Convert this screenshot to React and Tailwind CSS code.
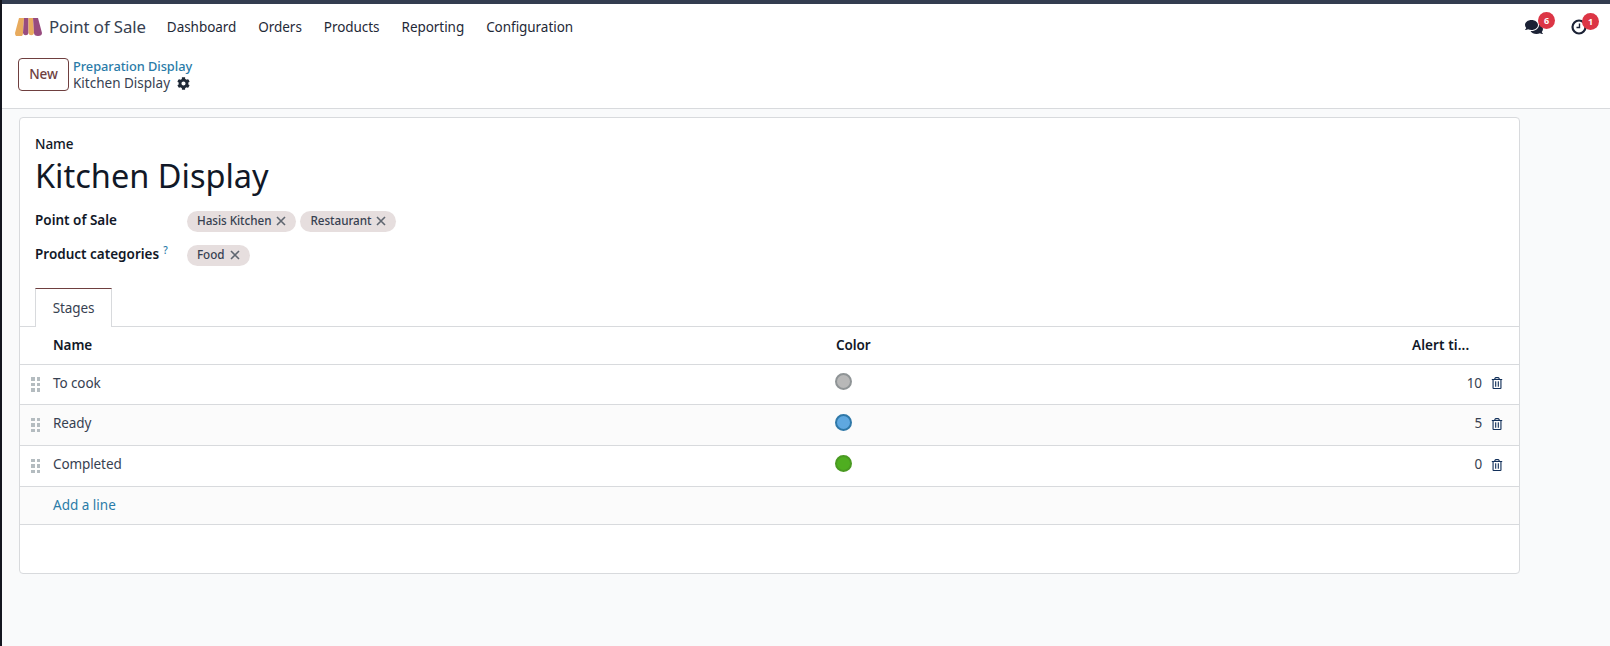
import React from "react";
import { FaCog, FaRegTrashAlt, FaComments } from "react-icons/fa";

function Logo() {
  return (
    <svg width="27" height="18" viewBox="0 0 27 18" className="shrink-0">
      <path d="M4 0h5l-1 15a3 3 0 0 1-8 0z" fill="#e8ab5e" />
      <path d="M9 0h4.500v15a2.800 2.800 0 0 1-5.500 0z" fill="#984c7f" />
      <path d="M13.500 0h4.500l1 15a2.800 2.800 0 0 1-5.500 0z" fill="#e8ab5e" />
      <path d="M18 0h5l4 15a4 3 0 0 1-8 0z" fill="#984c7f" />
    </svg>
  );
}

function Clock() {
  return (
    <svg width="16" height="16" viewBox="0 0 16 16">
      <circle cx="8" cy="8" r="6.500" fill="none" stroke="#1b2235" strokeWidth="2.200" />
      <path d="M8.500 4.500v4H5.500" fill="none" stroke="#1b2235" strokeWidth="1.400" />
    </svg>
  );
}

function Badge({ children }) {
  return (
    <span className="absolute -top-[6px] -right-[12px] flex h-[17px] w-[17px] items-center justify-center rounded-full bg-[#dc3545] text-[9px] font-bold tracking-normal text-white">
      {children}
    </span>
  );
}

function Tag({ children }) {
  return (
    <span className="flex h-[21px] items-center gap-[5px] rounded-full bg-[#e6dede] px-[10px] text-[11.7px] font-medium tracking-[-0.05px] text-[#374151]">
      {children}
      <svg width="10" height="10" viewBox="0 0 10 10">
        <path d="M1 1l8 8M9 1l-8 8" stroke="#5f6670" strokeWidth="1.600" fill="none" />
      </svg>
    </span>
  );
}

function Handle() {
  return (
    <div className="ml-[11px] grid w-[9px] grid-cols-2 gap-x-[2px] gap-y-[2px]">
      {[0, 1, 2, 3, 4, 5].map((i) => (
        <span key={i} className="h-[3.500px] w-[3.500px] bg-[#b4bcc0]" />
      ))}
    </div>
  );
}

const rowGrid = "grid grid-cols-[33px_783px_1fr_70px_37px] items-center border-b border-[#d8dadd]";

function Row({ name, dot, alert, striped, height }) {
  return (
    <div className={`${rowGrid} ${height} pb-[3px] ${striped ? "bg-[#fbfbfb]" : "bg-white"}`}>
      <div className="pt-[3px]">
        <Handle />
      </div>
      <span className="text-[#374151]">{name}</span>
      <span className={`ml-[-1px] -mt-[3px] h-[17px] w-[17px] rounded-full border-2 ${dot}`} />
      <span className="text-right text-[#374151]">{alert}</span>
      <div className="flex items-center pl-[9px] text-[12px] text-[#12305a]">
        <FaRegTrashAlt />
      </div>
    </div>
  );
}

export default function App() {
  return (
    <div className="flex h-[646px] w-full flex-col overflow-hidden border-l-2 border-[#14161f] bg-[#f9fafb] font-['Noto_Sans',sans-serif] text-[13.5px] tracking-[-0.1px] text-[#374151]">
      <div className="h-[4px] shrink-0 bg-[#333d50]" />

      <nav className="flex h-[46px] shrink-0 items-center bg-white pl-[13px]">
        <Logo />
        <span className="ml-[7px] text-[16.800px] text-[#374151]">Point of Sale</span>
        <div className="ml-[21px] flex items-center gap-[22px] tracking-[-0.05px] text-[#1f2937]">
          <span>Dashboard</span>
          <span>Orders</span>
          <span>Products</span>
          <span>Reporting</span>
          <span>Configuration</span>
        </div>
        <div className="ml-auto flex items-center gap-[28px] pr-[23px]">
          <span className="relative flex text-[18px] text-[#1b2235]">
            <FaComments />
            <Badge>6</Badge>
          </span>
          <span className="relative flex">
            <Clock />
            <Badge>1</Badge>
          </span>
        </div>
      </nav>

      <header className="flex h-[59px] shrink-0 items-start border-b border-[#d8dadd] bg-white pl-[16px] pt-[8px]">
        <button className="flex h-[33px] w-[51px] items-center justify-center rounded-[4px] border border-[#6f3f3f] font-medium text-[#6f3f3f]">
          New
        </button>
        <div className="ml-[4px] flex flex-col leading-[16px]">
          <span className="text-[12.8px] font-medium tracking-[-0.05px] text-[#2a7ba8]">Preparation Display</span>
          <span className="mt-[1px] flex items-center gap-[7px] tracking-normal text-[#374151]">
            Kitchen Display
            <FaCog className="text-[13px] text-[#1f2937]" />
          </span>
        </div>
      </header>

      <main className="pl-[17px] pt-[8px]">
        <section className="h-[457px] w-[1501px] rounded-[4px] border border-[#d8dadd] bg-white">
          <div className="pl-[15px] pt-[16px]">
            <div className="flex h-[20px] items-center font-medium text-[#111827]">Name</div>
            <div className="flex h-[44px] items-center text-[32.500px] tracking-normal text-[#111827]">Kitchen Display</div>
            <div className="mt-[12px] flex h-[22px] items-center">
              <span className="-mt-[2px] w-[152px] font-semibold tracking-normal text-[#111827]">Point of Sale</span>
              <div className="flex gap-[4px]">
                <Tag>Hasis Kitchen</Tag>
                <Tag>Restaurant</Tag>
              </div>
            </div>
            <div className="mt-[12px] flex h-[22px] items-center">
              <span className="-mt-[2px] w-[152px] font-semibold tracking-normal text-[#111827]">
                Product categories
                <sup className="ml-[4px] text-[10px] font-medium text-[#2a7ba8]">?</sup>
              </span>
              <Tag>Food</Tag>
            </div>
          </div>

          <div className="mt-[22px] flex h-[39px] border-b border-[#d8dadd] pl-[15px]">
            <div className="-mb-px flex h-[39px] w-[77px] items-center justify-center border-x border-t border-x-[#d8dadd] border-t-[#6f3f3f] bg-white pt-[1px] text-[#374151]">
              Stages
            </div>
          </div>

          <div className={`${rowGrid} h-[38px] bg-white font-semibold text-[#111827]`}>
            <span />
            <span>Name</span>
            <span>Color</span>
            <span className="whitespace-nowrap tracking-[0.1px]">Alert ti...</span>
            <span />
          </div>

          <Row name="To cook" alert="10" height="h-[40px]" dot="border-[#8f9496] bg-[radial-gradient(#b8b8b8_1px,#e0e0e0_1px)] bg-[length:2px_2px]" />
          <Row name="Ready" alert="5" height="h-[41px]" striped dot="border-[#2f78a8] bg-[#5fa8e0]" />
          <Row name="Completed" alert="0" height="h-[41px]" dot="border-[#4a9a22] bg-[#4fae20]" />

          <div className="flex h-[38px] items-center border-b border-[#d8dadd] bg-[#fbfbfb] pl-[33px] tracking-normal text-[#2a7ba8]">
            Add a line
          </div>
        </section>
      </main>
    </div>
  );
}
